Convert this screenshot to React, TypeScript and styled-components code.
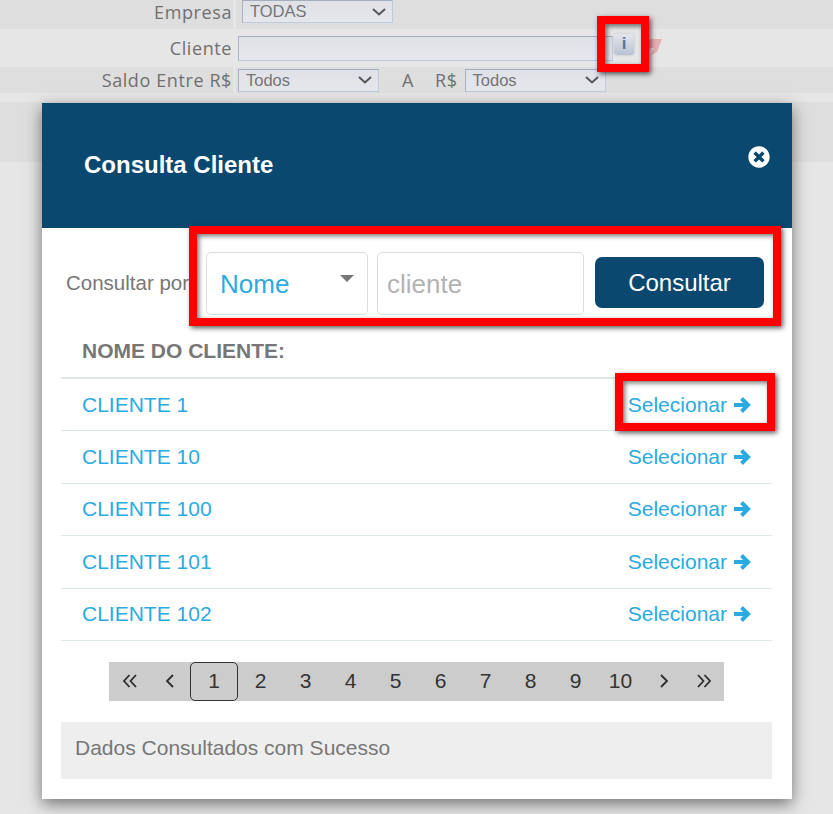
import React from "react";
import styled, { createGlobalStyle } from "styled-components";
import { FaTimesCircle } from "react-icons/fa";

const GlobalStyle = createGlobalStyle`
  html, body {
    margin: 0;
    padding: 0;
    background: #e6e6e6;
  }
`;

const Page = styled.div`
  position: relative;
  width: 833px;
  height: 814px;
  overflow: hidden;
  background: #e6e6e6;
  font-family: "Liberation Sans", Arial, sans-serif;
`;

const FilterRow = styled.div<{ $height: number }>`
  display: grid;
  grid-template-columns: 233px 1fr;
  column-gap: 3px;
  height: ${props => props.$height}px;
`;

const LabelCell = styled.div<{ $shaded?: boolean; $lift?: number }>`
  display: flex;
  align-items: center;
  justify-content: flex-end;
  padding: 0 1px ${props => props.$lift ?? 0}px 0;
  background: ${props => (props.$shaded ? "#dedede" : "transparent")};
  color: #707070;
  font-family: "Open Sans", sans-serif;
  font-size: 18px;
  letter-spacing: 0.6px;
`;

const ValueCell = styled.div<{ $shaded?: boolean; $indent?: number }>`
  display: flex;
  align-items: center;
  padding-left: ${props => props.$indent ?? 2}px;
  background: ${props => (props.$shaded ? "#dedede" : "transparent")};
`;

const FakeSelect = styled.div<{ $width: number; $align?: string }>`
  display: flex;
  align-items: center;
  justify-content: space-between;
  box-sizing: border-box;
  width: ${props => props.$width}px;
  height: 23px;
  padding: 0 6px 0 7px;
  align-self: ${props => props.$align ?? "center"};
  background: linear-gradient(#dfe1e7, #e6e7ec);
  border: 1px solid #bccbe0;
  border-top-color: #a4adbd;
  border-left-color: #a9b3c4;
  color: #757575;
  font-size: 16.5px;
`;

const ClientInput = styled.div`
  box-sizing: border-box;
  width: 375px;
  height: 25px;
  background: linear-gradient(#dfe1e7, #e6e7ec);
  border: 1px solid #bccbe0;
  border-top-color: #a4adbd;
  border-left-color: #a9b3c4;
`;

const InfoButton = styled.div`
  display: flex;
  align-items: center;
  justify-content: center;
  width: 20px;
  height: 21px;
  margin: 0 0 8px 1px;
  border-radius: 3px;
  background: linear-gradient(#e3e6ec, #b9c3d3);
  box-shadow: 0 0 2px rgba(120, 130, 150, 0.5);
  color: #66718a;
  font-size: 17px;
  font-weight: 700;
`;

const Smudge = styled.svg`
  width: 16px;
  height: 18px;
  margin: 0 0 2px 12px;
`;

const RangeText = styled.span<{ $gapLeft: number; $gapRight: number }>`
  margin: 0 ${props => props.$gapRight}px 0 ${props => props.$gapLeft}px;
  color: #707070;
  font-family: "Open Sans", sans-serif;
  font-size: 18px;
  letter-spacing: 0.6px;
`;

const Modal = styled.div`
  position: absolute;
  left: 42px;
  top: 103px;
  display: flex;
  flex-direction: column;
  width: 750px;
  height: 696px;
  background: #fff;
  box-shadow: 0 5px 15px rgba(0, 0, 0, 0.5);
`;

const ModalHeader = styled.div`
  display: flex;
  justify-content: space-between;
  height: 125px;
  padding: 49px 22px 0 42px;
  box-sizing: border-box;
  background: #0a4870;
  color: #fff;
`;

const ModalTitle = styled.h2`
  margin: 0;
  font-size: 24px;
  line-height: 26px;
  font-weight: 700;
`;

const CloseIcon = styled(FaTimesCircle)`
  width: 22px;
  height: 22px;
  margin-top: -6px;
`;

const ModalBody = styled.div`
  display: flex;
  flex-direction: column;
  padding: 0 20px 0 19px;
`;

const SearchRow = styled.div`
  display: flex;
  align-items: flex-start;
  height: 110px;
  padding-top: 24px;
  box-sizing: border-box;
`;

const SearchLabel = styled.span`
  width: 140px;
  margin-left: 5px;
  padding-top: 19px;
  flex-shrink: 0;
  color: #777;
  font-size: 20.5px;
  white-space: nowrap;
`;

const SearchSelect = styled.div`
  position: relative;
  box-sizing: border-box;
  width: 162px;
  height: 63px;
  padding: 16px 0 0 13px;
  border: 1px solid #ddd;
  border-radius: 5px;
  color: #29abe2;
  font-size: 26px;
`;

const Caret = styled.span`
  position: absolute;
  right: 13px;
  top: 22px;
  border-left: 7px solid transparent;
  border-right: 7px solid transparent;
  border-top: 7px solid #777;
`;

const SearchInput = styled.div`
  box-sizing: border-box;
  width: 207px;
  height: 63px;
  margin-left: 9px;
  padding: 16px 0 0 9px;
  border: 1px solid #ddd;
  border-radius: 5px;
  color: #b3b3b3;
  font-size: 26px;
`;

const SearchButton = styled.div`
  display: flex;
  align-items: center;
  justify-content: center;
  width: 169px;
  height: 51px;
  margin: 5px 0 0 11px;
  border-radius: 7px;
  background: #0a4870;
  color: #fff;
  font-size: 24px;
`;

const TableHeader = styled.div`
  display: flex;
  align-items: center;
  box-sizing: border-box;
  height: 41px;
  padding: 0 0 14px 21px;
  color: #777;
  font-size: 21px;
  font-weight: 700;
  border-bottom: 2px solid #dce8e8;
`;

const TableRow = styled.div`
  display: flex;
  align-items: center;
  justify-content: space-between;
  box-sizing: border-box;
  height: 52.4px;
  padding: 0 21px;
  border-bottom: 1.5px solid #dce8e8;
  color: #29abe2;
  font-size: 21px;
`;

const SelectLink = styled.span`
  display: flex;
  align-items: center;
  gap: 6px;
`;

const ArrowIcon = styled.svg`
  width: 18px;
  height: 18px;
`;

const Pagination = styled.div`
  display: flex;
  align-items: center;
  align-self: flex-start;
  width: 615px;
  height: 39px;
  margin: 21px 0 0 48px;
  background: #ccc;
  color: #333;
  font-size: 21px;
`;

const PageItem = styled.span<{ $width: number; $active?: boolean }>`
  display: flex;
  align-items: center;
  justify-content: center;
  box-sizing: border-box;
  width: ${props => props.$width}px;
  height: 39px;
  ${props => props.$active && "border: 1px solid #333; border-radius: 5px;"}
`;

const StatusBar = styled.div`
  display: flex;
  align-items: center;
  box-sizing: border-box;
  height: 57px;
  margin-top: 21px;
  padding: 0 0 5px 14px;
  background: #eee;
  color: #777;
  font-size: 21px;
`;

const Highlight = styled.div<{ $x: number; $y: number; $w: number; $h: number }>`
  position: absolute;
  left: ${props => props.$x}px;
  top: ${props => props.$y}px;
  box-sizing: border-box;
  width: ${props => props.$w}px;
  height: ${props => props.$h}px;
  border: 8px solid #f00;
  box-shadow: 2px 2px 5px rgba(0, 0, 0, 0.65), inset 2px 2px 5px rgba(0, 0, 0, 0.55);
`;

const Chevron = () => (
  <svg width="14" height="8" viewBox="0 0 14 8" fill="none" stroke="#555" strokeWidth="2">
    <path d="M1 1l6 5.500L13 1" />
  </svg>
);

const PagerIcon = ({ d }: { d: string }) => (
  <svg width="16" height="16" viewBox="0 0 16 16" fill="none" stroke="#2c2c2c" strokeWidth="1.8">
    <path d={d} />
  </svg>
);

const clients = ["CLIENTE 1", "CLIENTE 10", "CLIENTE 100", "CLIENTE 101", "CLIENTE 102"];
const pages = ["2", "3", "4", "5", "6", "7", "8", "9", "10"];

export default function App() {
  return (
    <Page>
      <GlobalStyle />
      <FilterRow $height={29}>
        <LabelCell $shaded $lift={5}>Empresa</LabelCell>
        <ValueCell $shaded $indent={6}>
          <FakeSelect $width={151} $align="flex-start">
            TODAS
            <Chevron />
          </FakeSelect>
        </ValueCell>
      </FilterRow>
      <FilterRow $height={38}>
        <LabelCell $lift={1}>Cliente</LabelCell>
        <ValueCell>
          <ClientInput />
          <InfoButton>i</InfoButton>
          <Smudge viewBox="0 0 16 18">
            <path d="M4 1h12l-5 13-6 3 3-7H1z" fill="#e4b0b4" />
          </Smudge>
        </ValueCell>
      </FilterRow>
      <FilterRow $height={26}>
        <LabelCell $shaded>Saldo Entre R$</LabelCell>
        <ValueCell $shaded>
          <FakeSelect $width={141}>
            Todos
            <Chevron />
          </FakeSelect>
          <RangeText $gapLeft={23} $gapRight={21}>A</RangeText>
          <RangeText $gapLeft={0} $gapRight={7}>R$</RangeText>
          <FakeSelect $width={141}>
            Todos
            <Chevron />
          </FakeSelect>
        </ValueCell>
      </FilterRow>
      <FilterRow $height={9} />
      <FilterRow $height={60}>
        <LabelCell $shaded />
        <ValueCell $shaded />
      </FilterRow>

      <Modal>
        <ModalHeader>
          <ModalTitle>Consulta Cliente</ModalTitle>
          <CloseIcon />
        </ModalHeader>
        <ModalBody>
          <SearchRow>
            <SearchLabel>Consultar por</SearchLabel>
            <SearchSelect>
              Nome
              <Caret />
            </SearchSelect>
            <SearchInput>cliente</SearchInput>
            <SearchButton>Consultar</SearchButton>
          </SearchRow>
          <TableHeader>NOME DO CLIENTE:</TableHeader>
          {clients.map(client => (
            <TableRow key={client}>
              {client}
              <SelectLink>
                Selecionar
                <ArrowIcon viewBox="0 0 18 18" fill="none" stroke="#29abe2" strokeWidth="4">
                  <path d="M1 9h13M8.500 2.500L15 9l-6.500 6.500" />
                </ArrowIcon>
              </SelectLink>
            </TableRow>
          ))}
          <Pagination>
            <PageItem $width={41}><PagerIcon d="M7.500 2L2 8l5.500 6M14 2L8.500 8l5.500 6" /></PageItem>
            <PageItem $width={40}><PagerIcon d="M11 2L5 8l6 6" /></PageItem>
            <PageItem $width={48} $active>1</PageItem>
            {pages.map(page => (
              <PageItem key={page} $width={45}>{page}</PageItem>
            ))}
            <PageItem $width={41}><PagerIcon d="M5 2l6 6-6 6" /></PageItem>
            <PageItem $width={40}><PagerIcon d="M2 2l5.500 6L2 14M8.500 2L14 8l-5.500 6" /></PageItem>
          </Pagination>
          <StatusBar>Dados Consultados com Sucesso</StatusBar>
        </ModalBody>
      </Modal>

      <Highlight $x={597} $y={16} $w={52} $h={56} />
      <Highlight $x={189} $y={226} $w={592} $h={100} />
      <Highlight $x={615} $y={373} $w={160} $h={58} />
    </Page>
  );
}
